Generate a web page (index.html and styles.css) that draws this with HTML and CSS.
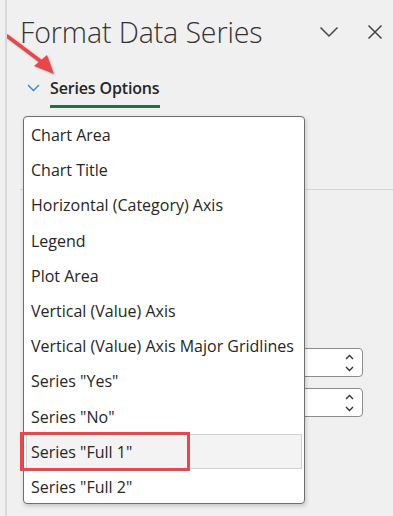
FILE: index.html
```html
<!DOCTYPE html>
<html lang="en">
<head>
    <meta charset="UTF-8">
    <meta name="viewport" content="width=device-width, initial-scale=1.0">
    <title>Format Data Series</title>
    <link rel="stylesheet" href="styles.css">
</head>
<body>
    <div class="pane">
        <div class="header">
            <h1 class="title">Format Data Series</h1>
            <div class="header-icons">
                <svg class="icon" width="20" height="12" viewBox="0 0 20 12"><path d="M1.5 1.5 L10 10 L18.5 1.5" fill="none" stroke="#444" stroke-width="1.5"/></svg>
                <svg class="icon" width="16" height="16" viewBox="0 0 16 16"><path d="M1.5 1.5 L14.5 14.5 M14.5 1.5 L1.5 14.5" fill="none" stroke="#444" stroke-width="1.5"/></svg>
            </div>
        </div>

        <div class="tabs">
            <svg class="tab-chevron" width="13" height="8" viewBox="0 0 13 8"><path d="M1 1 L6.5 6.5 L12 1" fill="none" stroke="#2b88d8" stroke-width="1.4"/></svg>
            <span class="tab">Series Options</span>
        </div>

        <!-- options under the open list -->
        <div class="options">
            <div class="divider"></div>
            <div class="spin spin-first">
                <svg width="9" height="20" viewBox="0 0 9 20"><path d="M1 6 L4.5 2.5 L8 6 M1 14 L4.5 17.5 L8 14" fill="none" stroke="#333" stroke-width="1.4"/></svg>
            </div>
            <div class="spin">
                <svg width="9" height="20" viewBox="0 0 9 20"><path d="M1 6 L4.5 2.5 L8 6 M1 14 L4.5 17.5 L8 14" fill="none" stroke="#333" stroke-width="1.4"/></svg>
            </div>
        </div>

        <ul class="dropdown">
            <li>Chart Area</li>
            <li>Chart Title</li>
            <li>Horizontal (Category) Axis</li>
            <li>Legend</li>
            <li>Plot Area</li>
            <li>Vertical (Value) Axis</li>
            <li>Vertical (Value) Axis Major Gridlines</li>
            <li>Series "Yes"</li>
            <li>Series "No"</li>
            <li class="hover">Series "Full 1"<span class="mark"></span></li>
            <li>Series "Full 2"</li>
        </ul>

        <svg class="arrow" width="60" height="80" viewBox="0 0 60 80">
            <path d="M2 31 L38 58" stroke="#e8464b" stroke-width="3.5" stroke-linecap="round"/>
            <path d="M49 69 L29 61 L42 50 Z" fill="#e8464b"/>
        </svg>
    </div>
</body>
</html>
```

FILE: styles.css
```css
* {
    margin: 0;
    padding: 0;
}
body {
    background: #f0f0f0;
    font-family: "Open Sans", "Noto Sans", sans-serif;
    color: #262626;
}
.pane {
    position: relative;
    margin-left: 5px;
    border-left: 2px solid #d9d9d9;
    height: 516px;
    overflow: hidden;
}
.header {
    display: flex;
    align-items: center;
    justify-content: space-between;
    padding: 14px 10px 0 13px;
    height: 36px;
}
.title {
    font-size: 28.5px;
    font-weight: 300;
    color: #333;
    line-height: 36px;
    letter-spacing: -0.1px;
}
.header-icons {
    display: flex;
    align-items: center;
    gap: 28px;
}
.tabs {
    display: flex;
    align-items: center;
    padding: 26px 0 0 20px;
}
.tab-chevron {
    margin-right: 10px;
    margin-bottom: 8px;
}
.tab {
    font-size: 16px;
    font-weight: 600;
    line-height: 24px;
    padding-bottom: 5px;
    border-bottom: 3px solid #1e7145;
    letter-spacing: -0.15px;
}
.options {
    padding-left: 13px;
}
.divider {
    margin-top: 81px;
    height: 1px;
    background: #d6d6d6;
}
.spin {
    margin: 11px 30px 0 200px;
    height: 27px;
    border: 1px solid #8c8c8c;
    border-radius: 4px;
    background: #fff;
    display: flex;
    align-items: center;
    justify-content: flex-end;
    padding-right: 8px;
}
.spin-first {
    margin-top: 158px;
}
.dropdown {
    position: absolute;
    left: 16px;
    top: 116px;
    width: 280px;
    height: 386px;
    list-style: none;
    background: #fff;
    border: 1.5px solid #6f6f6f;
    border-radius: 4px;
    box-shadow: 1px 2px 4px rgba(0, 0, 0, 0.18);
}
.dropdown li {
    position: relative;
    box-sizing: border-box;
    height: 35.2px;
    line-height: 33.2px;
    padding: 2px 0 0 5px;
    margin: 0 2px;
    font-size: 16px;
    white-space: nowrap;
}
.dropdown li.hover {
    background: #f3f3f3;
    box-shadow: inset 0 0 0 1px #d2d2d2;
}
.mark {
    position: absolute;
    left: -6px;
    top: -2px;
    width: 164px;
    height: 33px;
    border: 3px solid #e8474c;
}
.arrow {
    position: absolute;
    left: -2px;
    top: 5px;
    filter: drop-shadow(1px 1px 1px rgba(0, 0, 0, 0.25));
}
```
